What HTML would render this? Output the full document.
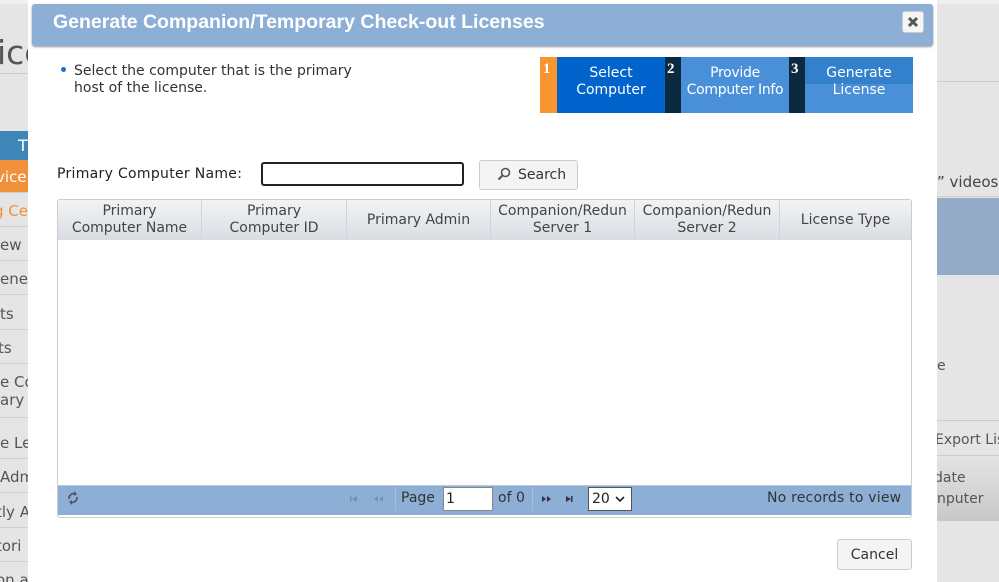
<!DOCTYPE html>
<html style="height:582px;overflow:hidden"><head><style>
*{box-sizing:border-box;margin:0;padding:0}
body{width:999px;height:582px;overflow:hidden;background:#e5e5e5;font-family:"DejaVu Sans","Liberation Sans",sans-serif;position:relative;color:#222}
.a{position:absolute}
.nav{left:0;width:28px;height:34px;border-bottom:1px solid #d0d0d0;font-size:15px;color:#555;white-space:nowrap;overflow:hidden;line-height:36px}
.modal{left:28px;top:0;width:909px;height:582px;background:#fff}
.th{top:202px;height:40px;font-size:14px;color:#444;text-align:center;border-right:1px solid #d0d4da;display:flex;align-items:center;justify-content:center;line-height:17px;white-space:nowrap;overflow:hidden}
</style></head><body>
<div class="a" style="left:0;top:0;width:999px;height:4px;background:#efefef"></div>
<div class="a" style="left:0;top:33px;font-size:33px;color:#555;width:28px;overflow:hidden;white-space:nowrap;text-indent:-3px">ice</div>
<div class="a" style="left:0;top:73px;width:28px;border-top:1px solid #ccc"></div>
<div class="a" style="left:0;top:131px;width:28px;height:29px;background:#3f86b8;color:#fff;font-size:16px;line-height:29px;padding-left:18px;overflow:hidden">T</div>
<div class="a nav" style="top:160px;background:#f0913a;color:#fff;height:33px;line-height:34px;text-indent:-4px">vice</div>
<div class="a nav" style="top:193px;color:#f0913a;text-indent:-6px">g Ce</div>
<div class="a nav" style="top:227px">ew</div>
<div class="a nav" style="top:261px">enev</div>
<div class="a nav" style="top:296px">ts</div>
<div class="a nav" style="top:330px;text-indent:-2px">ts</div>
<div class="a nav" style="top:364px;height:26px;line-height:36px;border:0">e Co</div>
<div class="a nav" style="top:390px;height:36px;line-height:36px;margin-top:-8px">ary L</div>
<div class="a nav" style="top:425px">e Le</div>
<div class="a nav" style="top:459px">Adm</div>
<div class="a nav" style="top:494px;text-indent:-4px">tly A</div>
<div class="a nav" style="top:528px;text-indent:-4px">tori</div>
<div class="a nav" style="top:562px;height:20px;border:0;text-indent:-4px">on a</div>

<div class="a" style="left:937px;top:81px;width:62px;border-top:1px solid #ccc"></div>
<div class="a" style="left:937px;top:173px;font-size:15px;color:#444;white-space:nowrap">” videos</div>
<div class="a" style="left:937px;top:196px;width:62px;border-top:1px solid #ccc"></div>
<div class="a" style="left:937px;top:198px;width:62px;height:77px;background:#93abc7"></div>
<div class="a" style="left:937px;top:358px;font-size:14px;color:#555">e</div>
<div class="a" style="left:937px;top:420px;width:62px;border-top:1px solid #ccc"></div>
<div class="a" style="left:935px;top:432px;font-size:14px;color:#555;white-space:nowrap">Export Lis</div>
<div class="a" style="left:937px;top:455px;width:62px;height:66px;background:linear-gradient(#e4e4e4,#c8c8c8);border-top:1px solid #ccc;font-size:14px;color:#555;line-height:21px;padding-top:12px;white-space:nowrap;text-indent:-3px">date<br>nputer</div>

<div class="a modal"></div>
<div class="a" style="left:32px;top:4px;width:901px;height:42px;background:#8dafd6;border-radius:3px;box-shadow:0 1px 2px #999"></div>
<div class="a" style="left:53px;top:11px;font-family:'Liberation Sans',sans-serif;font-weight:bold;font-size:19.5px;color:#fff">Generate Companion/Temporary Check-out Licenses</div>
<div class="a" style="left:902px;top:11px;width:22px;height:22px;background:#f5f5f5;border-radius:3px;border:1px solid #ccc"></div>
<svg class="a" style="left:907px;top:16px" width="12" height="12"><path d="M2 2L10 10M10 2L2 10" stroke="#555" stroke-width="3"/></svg>

<div class="a" style="left:61px;top:67px;width:5px;height:5px;border-radius:50%;background:#1a6fcf"></div>
<div class="a" style="left:74px;top:63px;font-size:14px;line-height:17px;color:#333">Select the computer that is the primary<br>host of the license.</div>

<div class="a" style="left:540px;top:57px;width:373px;height:56px;background:#4a90d9"></div>
<div class="a" style="left:540px;top:57px;width:17px;height:56px;background:#f7962f;color:#fff;font:bold 15px 'Liberation Serif',serif;padding:4px 0 0 3px">1</div>
<div class="a" style="left:557px;top:57px;width:108px;height:56px;background:#0064cc;color:#fff;font-size:14px;text-align:center;line-height:17px;padding-top:8px">Select<br>Computer</div>
<div class="a" style="left:665px;top:57px;width:16px;height:56px;background:#0b2a40;color:#fff;font:bold 15px 'Liberation Serif',serif;padding:4px 0 0 2px">2</div>
<div class="a" style="left:681px;top:57px;width:108px;height:56px;color:#fff;font-size:14px;text-align:center;line-height:17px;padding-top:8px;white-space:nowrap;letter-spacing:-0.3px">Provide<br>Computer Info</div>
<div class="a" style="left:789px;top:57px;width:16px;height:56px;background:#0b2a40;color:#fff;font:bold 15px 'Liberation Serif',serif;padding:4px 0 0 2px">3</div>
<div class="a" style="left:805px;top:57px;width:108px;height:27px;background:#3380cc"></div>
<div class="a" style="left:805px;top:57px;width:108px;height:56px;color:#fff;font-size:14px;text-align:center;line-height:17px;padding-top:8px">Generate<br>License</div>

<div class="a" style="left:57px;top:166px;font-size:14px;color:#222;letter-spacing:0.3px">Primary Computer Name:</div>
<div class="a" style="left:261px;top:162px;width:203px;height:24px;border:2px solid #222;border-radius:3px"></div>
<div class="a" style="left:479px;top:160px;width:99px;height:30px;border:1px solid #ccc;border-radius:3px;background:#f4f4f4;font-size:14px;color:#333;line-height:28px;padding-left:38px">Search</div>
<svg class="a" style="left:497px;top:167px" width="14" height="14"><circle cx="8.5" cy="5.5" r="4" fill="none" stroke="#555" stroke-width="1.6"/><path d="M5.5 8.5L1.5 12.5" stroke="#555" stroke-width="2"/></svg>

<div class="a" style="left:57px;top:199px;width:855px;height:319px;border:1px solid #ccc;border-radius:3px;background:#fff"></div>
<div class="a" style="left:58px;top:200px;width:853px;height:40px;background:linear-gradient(#f2f3f5,#d9dde2)"></div>
<div class="a th" style="left:58px;width:144px;top:200px">Primary<br>Computer Name</div>
<div class="a th" style="left:202px;width:145px;top:200px">Primary<br>Computer ID</div>
<div class="a th" style="left:347px;width:144px;top:200px">Primary Admin</div>
<div class="a th" style="left:491px;width:144px;top:200px">Companion/Redun<br>Server 1</div>
<div class="a th" style="left:635px;width:145px;top:200px">Companion/Redun<br>Server 2</div>
<div class="a th" style="left:780px;width:131px;top:200px;border-right:0">License Type</div>

<div class="a" style="left:58px;top:485px;width:853px;height:30px;background:#8dafd6;border-top:1px solid #b8c8dc"></div>
<svg class="a" style="left:66px;top:490px" width="14" height="16"><path d="M10 4A5 5 0 0 0 3 9M4 12A5 5 0 0 0 11 7" fill="none" stroke="#556" stroke-width="1.8"/><path d="M8 1L11 4L8 6Z M6 15L3 12L6 10Z" fill="#556"/></svg>
<svg class="a" style="left:349px;top:494px" width="40" height="10"><rect x="1" y="2" width="1.5" height="6" fill="#7a8fa8"/><path d="M8 2L3 5L8 8Z" fill="#7a8fa8"/><path d="M29 2L25 5L29 8Z M34 2L30 5L34 8Z" fill="#7a8fa8"/></svg>
<div class="a" style="left:395px;top:487px;width:1px;height:24px;background:#a8bfdc"></div>
<div class="a" style="left:401px;top:490px;font-size:14px;color:#333">Page</div>
<div class="a" style="left:443px;top:487px;width:50px;height:24px;background:#fff;border:1px solid #888;font-size:14px;padding-left:2px;line-height:22px">1</div>
<div class="a" style="left:498px;top:490px;font-size:14px;color:#333">of 0</div>
<div class="a" style="left:532px;top:487px;width:1px;height:24px;background:#a8bfdc"></div>
<svg class="a" style="left:540px;top:494px" width="40" height="10"><path d="M2 2L6 5L2 8Z M7 2L11 5L7 8Z" fill="#334"/><path d="M26 2L31 5L26 8Z" fill="#334"/><rect x="31" y="2" width="1.5" height="6" fill="#334"/></svg>
<div class="a" style="left:588px;top:487px;width:44px;height:24px;background:#fff;border:1px solid #555;font-size:14px;padding-left:3px;line-height:22px">20</div>
<svg class="a" style="left:615px;top:495px" width="10" height="8"><path d="M1 2L5 6L9 2" fill="none" stroke="#222" stroke-width="1.6"/></svg>
<div class="a" style="left:767px;top:490px;font-size:14px;color:#333;letter-spacing:0.2px">No records to view</div>

<div class="a" style="left:837px;top:539px;width:75px;height:31px;border:1px solid #ccc;border-radius:3px;background:#f4f4f4;font-size:14px;color:#333;text-align:center;line-height:31px">Cancel</div>
</body></html>
